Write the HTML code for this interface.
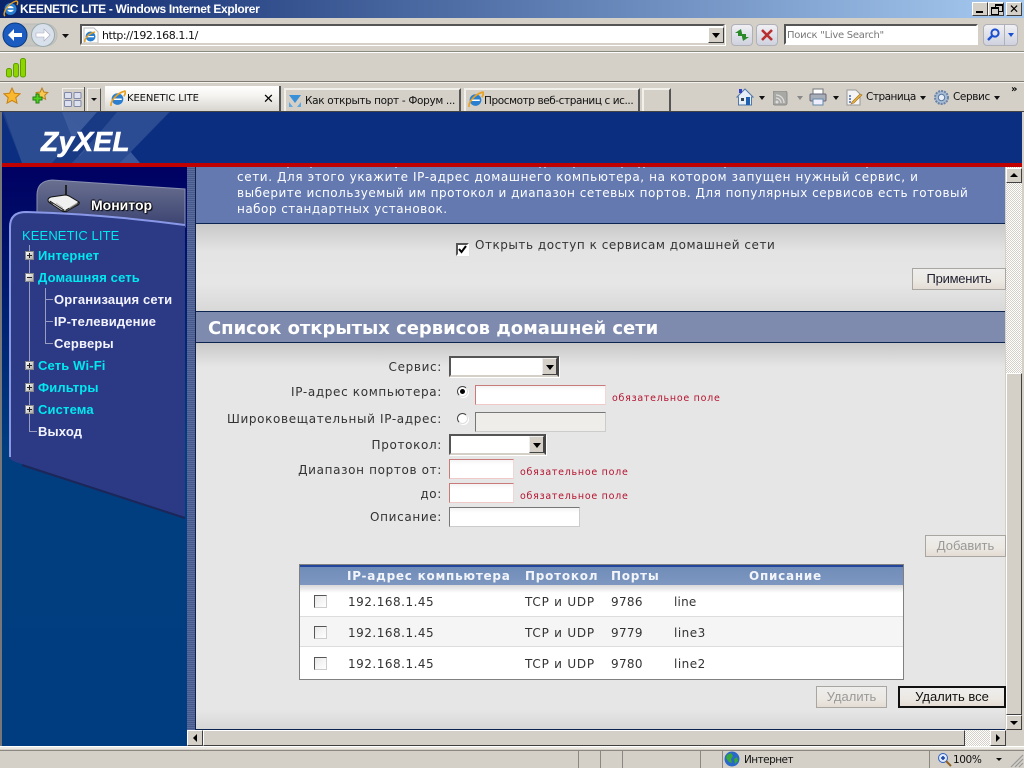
<!DOCTYPE html>
<html><head><meta charset="utf-8"><title>KEENETIC LITE</title>
<style>
html,body{margin:0;padding:0;width:1024px;height:768px;overflow:hidden;background:#d4d0c8}
body{position:relative;font-family:"Liberation Sans",sans-serif}
.a{position:absolute;white-space:nowrap}
.ui{font-family:"DejaVu Sans",sans-serif;font-size:10.5px;color:#111;line-height:14px}
.v{font-family:"DejaVu Sans",sans-serif;font-size:12px;color:#333;line-height:16px}
.lab{text-align:right;right:582px;letter-spacing:.65px}
.req{font-family:"DejaVu Sans",sans-serif;font-size:9.5px;color:#b5122e;line-height:12px;letter-spacing:.73px}
.inp{background:linear-gradient(#f4f4f4,#fff 5px);border:1px solid #c88;border-top-color:#c97a7a;border-left-color:#c97a7a;border-right-color:#f0d8d8;border-bottom-color:#f0c8c8;box-sizing:border-box}
.sel{background:#fff;box-sizing:border-box;border:2px solid;border-color:#555 #444 #d4d0c8 #555;box-shadow:1px 1px 0 #fff}
.arr{position:absolute;top:0;right:0;width:15px;height:100%;box-sizing:border-box;background:#d4d0c8;border:1px solid;border-color:#eee #444 #444 #eee}
.arr:after{content:"";position:absolute;left:3px;top:6px;border:4px solid transparent;border-top:5px solid #000;border-bottom:0}
.btn{box-sizing:border-box;border:1px solid #a9a5a0;background:linear-gradient(#eeeeee,#ece8e2 60%,#e4dcd4);text-align:center;font:13px/20px "Liberation Sans",sans-serif;color:#223}
.dis{color:#999}
.cb{position:absolute;width:13px;height:13px;box-sizing:border-box;border:1px solid;border-color:#555 #ccc #ccc #555;background:linear-gradient(135deg,#e8e8e8,#fff)}
.t{font-family:"DejaVu Sans",sans-serif;font-size:12px;color:#333;line-height:16px}
.th{font-family:"DejaVu Sans",sans-serif;font-size:12px;font-weight:bold;color:#f2f5fa;line-height:16px;letter-spacing:.75px}
.m{font:bold 13px/16px "Liberation Sans",sans-serif;color:#00e8f0;letter-spacing:.15px}
.w{color:#f4f4ff}
.box{position:absolute;left:25px;width:9px;height:9px;box-sizing:border-box;background:linear-gradient(135deg,#fff,#aaa);border:1px solid #888}
.box:before{content:"";position:absolute;left:1px;top:3px;width:5px;height:1px;background:#222}
.p:after{content:"";position:absolute;left:3px;top:1px;width:1px;height:5px;background:#222}
.ln{position:absolute;background:#9a9cc0}
.chk{background-image:repeating-conic-gradient(#d4d0c8 0 25%,#fff 0 50%);background-size:2px 2px}
.sb{position:absolute;box-sizing:border-box;background:#d4d0c8;border:1px solid;border-color:#fff #404040 #404040 #fff}
.tab{position:absolute;box-sizing:border-box;background:#d4d0c8;border-top:2px solid #f2f0ea;border-left:2px solid #f2f0ea;border-right:2px solid #555}
</style></head><body>

<!-- Title bar -->
<div class="a" style="left:0;top:0;width:1024px;height:18px;background:linear-gradient(90deg,#0a246a,#a6caf0)"></div>
<svg class="a" style="left:2px;top:0" width="17" height="18" viewBox="0 0 17 18"><ellipse cx="8.5" cy="9" rx="6" ry="6" fill="#2a7fd0"/><ellipse cx="8.5" cy="9" rx="3.4" ry="3" fill="#fff"/><rect x="4" y="8.2" width="9" height="1.6" fill="#2a7fd0"/><path d="M3 16C0 14 5 4 14 1c2 0 2 2 1 4" fill="none" stroke="#e8a020" stroke-width="1.4"/></svg>
<div class="a" style="left:20px;top:2px;font:bold 12px/14px 'Liberation Sans',sans-serif;color:#fff;letter-spacing:-.32px">KEENETIC LITE - Windows Internet Explorer</div>
<div class="a sb" style="left:972px;top:2px;width:16px;height:14px"><div class="a" style="left:3px;top:8px;width:7px;height:2px;background:#000"></div></div>
<div class="a sb" style="left:988px;top:2px;width:16px;height:14px"><div class="a" style="left:6px;top:1px;width:6px;height:5px;border:1px solid #000;border-top-width:2px"></div><div class="a" style="left:2px;top:4px;width:6px;height:5px;border:1px solid #000;border-top-width:2px;background:#d4d0c8"></div></div>
<div class="a sb" style="left:1006px;top:2px;width:16px;height:14px;font:bold 12px/12px 'DejaVu Sans',sans-serif;text-align:center">✕</div>

<!-- Address row -->
<svg class="a" style="left:0;top:19px" width="75" height="32" viewBox="0 0 75 32">
<rect x="5" y="5" width="52" height="22" rx="11" fill="#c8c6c0" stroke="#bbb"/>
<circle cx="15" cy="16" r="12" fill="#1c5cc0" stroke="#0c3a80"/><path d="M8 16l6-6v4h8v4h-8v4z" fill="#fff"/>
<circle cx="43" cy="16" r="11.5" fill="#d8e0ec" stroke="#9aa"/><path d="M50 16l-6-6v4h-8v4h8v4z" fill="#fff" stroke="#aab" stroke-width=".6"/>
<path d="M62 15h7l-3.5 4z" fill="#111"/></svg>
<div class="a" style="left:80px;top:24px;width:645px;height:21px;box-sizing:border-box;background:#fff;border:2px solid;border-color:#555 #d4d0c8 #d4d0c8 #555;box-shadow:1px 1px 0 #fff"></div>
<svg class="a" style="left:83px;top:27px" width="16" height="16" viewBox="0 0 16 16"><path d="M1 1h10l4 4v11H1z" fill="#fff" stroke="#bbb"/><circle cx="7.5" cy="9.5" r="5" fill="#2a7fd0"/><rect x="4" y="9" width="7" height="1.3" fill="#fff"/><path d="M2 15C1 12 6 6 12 5" fill="none" stroke="#e8a020" stroke-width="1.4"/></svg>
<div class="a ui" style="left:102px;top:29px;font-size:11px;letter-spacing:-.42px">http://192.168.1.1/</div>
<div class="a sb" style="left:708px;top:27px;width:16px;height:16px"><div class="a" style="left:3px;top:5px;border:4px solid transparent;border-top:5px solid #000;border-bottom:0"></div></div>
<div class="a" style="left:731px;top:24px;width:22px;height:22px;box-sizing:border-box;border:1px solid #b0b0b8;border-radius:4px;background:linear-gradient(#f0f0f4,#cfd2de)"></div>
<svg class="a" style="left:733px;top:26px" width="18" height="18" viewBox="0 0 18 18"><path d="M8 3L2 7h3v3h4V7zM10 15l6-4h-3V8H9v3z" fill="#2a8a2a"/></svg>
<div class="a" style="left:756px;top:24px;width:22px;height:22px;box-sizing:border-box;border:1px solid #b0b0b8;border-radius:4px;background:linear-gradient(#f0f0f4,#cfd2de)"></div>
<svg class="a" style="left:759px;top:27px" width="16" height="16" viewBox="0 0 16 16"><path d="M3 3l10 10M13 3L3 13" stroke="#b83030" stroke-width="2.6"/></svg>
<div class="a" style="left:784px;top:24px;width:194px;height:21px;box-sizing:border-box;background:#fff;border:2px solid;border-color:#555 #fff #fff #555"></div>
<div class="a ui" style="left:787px;top:29px;font-size:10px;color:#777;letter-spacing:-.27px">Поиск "Live Search"</div>
<div class="a" style="left:983px;top:24px;width:22px;height:22px;box-sizing:border-box;border:1px solid #b0b0b8;border-radius:4px 0 0 4px;background:linear-gradient(#f0f0f4,#cfd2de)"></div>
<svg class="a" style="left:985px;top:26px" width="18" height="18" viewBox="0 0 18 18"><circle cx="10" cy="7" r="3.6" fill="none" stroke="#1a50d0" stroke-width="2"/><path d="M7 10l-4 4" stroke="#1a50d0" stroke-width="2.4"/></svg>
<div class="a" style="left:1005px;top:24px;width:13px;height:22px;box-sizing:border-box;border:1px solid #b0b0b8;border-left:0;border-radius:0 4px 4px 0;background:linear-gradient(#f0f0f4,#cfd2de)"></div>
<div class="a" style="left:1008px;top:33px;border:3px solid transparent;border-top:4px solid #1a50d0;border-bottom:0"></div>
<div class="a" style="left:0;top:51px;width:1024px;height:1px;background:#8a8a80"></div>
<div class="a" style="left:0;top:52px;width:1024px;height:1px;background:#fff"></div>

<!-- Signal row -->
<svg class="a" style="left:5px;top:56px" width="22" height="23" viewBox="0 0 22 23"><rect x="1.500" y="12.500" width="5" height="8.500" rx="2" fill="#8ed400" stroke="#5da000"/><rect x="8.500" y="7.500" width="5" height="13.500" rx="2" fill="#8ed400" stroke="#5da000"/><rect x="15.500" y="2.500" width="5" height="18.500" rx="2" fill="#8ed400" stroke="#5da000"/></svg>
<div class="a" style="left:0;top:81px;width:1024px;height:1px;background:#807c74"></div>
<div class="a" style="left:0;top:82px;width:1024px;height:1px;background:#f4f2ec"></div>

<!-- Tabs row -->
<svg class="a" style="left:3px;top:87px" width="18" height="18" viewBox="0 0 18 18"><path d="M9 1l2.4 5.2 5.6.6-4.2 3.8 1.2 5.6L9 13.4 4 16.2l1.2-5.6L1 6.800l5.600-.6z" fill="#f8b830" stroke="#c88010"/></svg>
<svg class="a" style="left:31px;top:87px" width="18" height="18" viewBox="0 0 18 18"><path d="M11 1l1.800 4 4 .5-3 2.800.8 4-3.600-2-3.600 2 .8-4-3-2.800 4-.5z" fill="#f8c850" stroke="#b88020"/><path d="M5 7h3v3h3v3H8v3H5v-3H2v-3h3z" fill="#50d020" stroke="#208010"/></svg>
<div class="a" style="left:62px;top:88px;width:22px;height:22px;box-sizing:border-box;border:1px solid #f2f0ea;border-right:0;border-bottom:0"></div>
<svg class="a" style="left:64px;top:92px" width="18" height="16" viewBox="0 0 18 16"><g fill="#dde0ee" stroke="#8088a8"><rect x=".5" y=".5" width="7" height="6" rx="1"/><rect x="10" y=".5" width="7" height="6" rx="1"/><rect x=".5" y="8.500" width="7" height="6" rx="1"/><rect x="10" y="8.500" width="7" height="6" rx="1"/></g></svg>
<div class="a" style="left:84px;top:87px;width:1px;height:24px;background:#555"></div>
<div class="a" style="left:87px;top:88px;width:14px;height:23px;box-sizing:border-box;border:1px solid #f2f0ea;border-right:1px solid #555;border-bottom:0"></div>
<div class="a" style="left:91px;top:98px;border:3px solid transparent;border-top:3px solid #111;border-bottom:0"></div>
<div class="a" style="left:105px;top:86px;width:176px;height:25px;box-sizing:border-box;background:linear-gradient(#fff,#f4f3f0 40%,#d8d5ce);border-right:2px solid #555"></div>
<svg class="a" style="left:109px;top:90px" width="17" height="17" viewBox="0 0 16 16"><circle cx="8" cy="8.500" r="5.500" fill="#2a7fd0"/><rect x="4" y="8" width="8" height="1.400" fill="#fff"/><path d="M2 15C1 11 7 3 15 1c1 2 0 3-1 5" fill="none" stroke="#e8a020" stroke-width="1.500"/></svg>
<div class="a ui" style="left:127px;top:92px;font-size:10px;letter-spacing:-.1px">KEENETIC LITE</div>
<div class="a" style="left:263px;top:93px;font:bold 13px/13px 'DejaVu Sans',sans-serif;color:#000">✕</div>
<div class="tab" style="left:284px;top:88px;width:177px;height:23px"></div>
<svg class="a" style="left:288px;top:94px" width="14" height="14" viewBox="0 0 14 14"><path d="M1 1h12L7 9z" fill="#3a90d8"/><path d="M1 8l4 5H1zM13 8l-4 5h4z" fill="#60a8e0"/></svg>
<div class="a ui" style="left:305px;top:94px;font-size:10.500px;letter-spacing:-.33px">Как открыть порт - Форум ...</div>
<div class="tab" style="left:464px;top:88px;width:176px;height:23px"></div>
<svg class="a" style="left:467px;top:91px" width="17" height="17" viewBox="0 0 16 16"><circle cx="8" cy="8.500" r="5.500" fill="#2a7fd0"/><rect x="4" y="8" width="8" height="1.400" fill="#fff"/><path d="M2 15C1 11 7 3 15 1c1 2 0 3-1 5" fill="none" stroke="#e8a020" stroke-width="1.500"/></svg>
<div class="a ui" style="left:484px;top:94px;font-size:10.500px;letter-spacing:-.42px">Просмотр веб-страниц с ис...</div>
<div class="tab" style="left:642px;top:88px;width:29px;height:23px"></div>

<svg class="a" style="left:736px;top:88px" width="18" height="18" viewBox="0 0 18 18"><path d="M1 9l8-8 8 8-1.500 0v8h-13v-8z" fill="#e8eef8" stroke="#5078a8"/><rect x="10" y="9" width="4" height="8" fill="#2060b0"/><rect x="5" y="10" width="3" height="3" fill="#345"/><rect x="3" y="1" width="3" height="4" fill="#3040c0"/></svg>
<div class="a" style="left:759px;top:96px;border:3px solid transparent;border-top:4px solid #111;border-bottom:0"></div>
<svg class="a" style="left:773px;top:91px" width="15" height="15" viewBox="0 0 15 15"><rect width="14" height="14" rx="2" fill="#a8a8a4" stroke="#8c8c88"/><circle cx="4" cy="11" r="1.500" fill="#ddd"/><path d="M3 7a5 5 0 015 5M3 4a8 8 0 018 8" fill="none" stroke="#ddd" stroke-width="1.300"/></svg>
<div class="a" style="left:797px;top:96px;border:3px solid transparent;border-top:4px solid #888;border-bottom:0"></div>
<svg class="a" style="left:809px;top:88px" width="18" height="18" viewBox="0 0 18 18"><rect x="4" y="1" width="10" height="6" fill="#fff" stroke="#777"/><rect x="1" y="6" width="16" height="7" rx="1" fill="#a8aeb8" stroke="#667"/><rect x="4" y="11" width="10" height="6" fill="#eef" stroke="#68a"/></svg>
<div class="a" style="left:833px;top:96px;border:3px solid transparent;border-top:4px solid #111;border-bottom:0"></div>
<svg class="a" style="left:846px;top:89px" width="17" height="17" viewBox="0 0 17 17"><path d="M1 1h9l4 4v11H1z" fill="#f4f4f4" stroke="#999"/><path d="M3 7h2M3 10h2M3 13h2" stroke="#46a" stroke-width="1.500"/><path d="M6 13l8-8 2 1-8 8-3 1z" fill="#e8b040" stroke="#a07020" stroke-width=".6"/></svg>
<div class="a ui" style="left:866px;top:90px;letter-spacing:-.5px">Страница</div>
<div class="a" style="left:920px;top:96px;border:3px solid transparent;border-top:4px solid #111;border-bottom:0"></div>
<svg class="a" style="left:933px;top:89px" width="17" height="17" viewBox="0 0 17 17"><circle cx="8.500" cy="8.500" r="6.500" fill="#a8bcd4" stroke="#6a84a8" stroke-width="2" stroke-dasharray="2 1"/><circle cx="8.500" cy="8.500" r="3.200" fill="#e8eef6" stroke="#5878a0"/></svg>
<div class="a ui" style="left:953px;top:90px;letter-spacing:-.4px">Сервис</div>
<div class="a" style="left:994px;top:96px;border:3px solid transparent;border-top:4px solid #111;border-bottom:0"></div>
<div class="a" style="left:1011px;top:85px;font:bold 10px/10px 'DejaVu Sans',sans-serif;letter-spacing:-1px">»</div>
<div class="a" style="left:0;top:111px;width:1024px;height:1px;background:#444"></div>

<!-- Page frame -->
<div class="a" style="left:0;top:112px;width:2px;height:636px;background:#777"></div>
<!-- Banner -->
<div class="a" style="left:2px;top:112px;width:1020px;height:51px;background:#0c2e80;overflow:hidden"></div>
<svg class="a" style="left:2px;top:112px" width="170" height="51" viewBox="0 0 170 51">
<path d="M0 0H168L118 51H20z" fill="#1f4088"/>
<path d="M2 0H60L118 51H20z" fill="#2c4c92"/>
<path d="M60 0H95L138 51H80z" fill="#3f5e9f" opacity=".9"/>
<path d="M95 0h22L70 51H50z" fill="#183a84"/>
<path d="M115 0h52l-49 51H72z" fill="#2b4b92"/>
</svg>
<div class="a" style="left:41px;top:125px;font:italic bold 28px/34px 'Liberation Sans',sans-serif;color:#fff;letter-spacing:.35px;-webkit-text-stroke:.6px #fff">ZyXEL</div>
<div class="a" style="left:2px;top:163px;width:1020px;height:4px;background:#c00000"></div>

<!-- Sidebar -->
<div class="a" style="left:2px;top:167px;width:185px;height:563px;background:linear-gradient(#000062,#003e80 50%,#003d80)"></div>
<div class="a" style="left:2px;top:730px;width:185px;height:16px;background:#003d80"></div>
<svg class="a" style="left:2px;top:167px" width="185" height="360" viewBox="0 0 185 360">
<defs><linearGradient id="tb" x1="0" y1="0" x2="0" y2="1"><stop offset="0" stop-color="#6a7090"/><stop offset="1" stop-color="#3a4270"/></linearGradient></defs>
<path d="M35 60V28Q35 14 50 13L183 22V60z" fill="url(#tb)" stroke="#8a90b0"/>
<path d="M7 290V60Q7 44 24 44Q100 46 183 57V350L20 297Q8 294 7 290z" fill="#2c3a86"/>
<path d="M8 290V60Q8 45 24 45Q100 47 183 58" fill="none" stroke="#8a98e8" stroke-width="2"/>
<path d="M20 298L183 351" fill="none" stroke="#1c2658" stroke-width="2"/>
</svg>
<svg class="a" style="left:47px;top:184px" width="34" height="30" viewBox="0 0 34 30"><path d="M19 1v13" stroke="#222" stroke-width="2"/><path d="M1 16Q1 14 4 13L18 11Q20 11 22 12L32 18Q33 19 31 21L19 27Q17 28 15 27L3 19Q1 18 1 16z" fill="#f0f0f0" stroke="#111"/><path d="M3 19L17 28V26L3 17zM19 28L32 20V18L19 26z" fill="#555" stroke="#111" stroke-width=".7"/><path d="M6 20l9 6M9 19l7 5M22 24l8-5" stroke="#bbb" stroke-width=".8"/></svg>
<div class="a" style="left:91px;top:196px;font:bold 14px/18px 'Liberation Sans',sans-serif;color:#fff;text-shadow:1px 1px 1px #000,-1px 0 1px #000,0 -1px 1px #000">Монитор</div>
<div class="a" style="left:22px;top:228px;font:13px/16px 'Liberation Sans',sans-serif;color:#00e8f0;letter-spacing:.1px">KEENETIC LITE</div>
<div class="ln" style="left:29px;top:245px;width:1px;height:187px"></div>
<div class="ln" style="left:45px;top:288px;width:1px;height:56px"></div>
<div class="ln" style="left:45px;top:299px;width:8px;height:1px"></div>
<div class="ln" style="left:45px;top:321px;width:8px;height:1px"></div>
<div class="ln" style="left:45px;top:343px;width:8px;height:1px"></div>
<div class="ln" style="left:29px;top:431px;width:8px;height:1px"></div>
<div class="box p" style="top:251px"></div><div class="box" style="top:273px"></div><div class="box p" style="top:361px"></div><div class="box p" style="top:383px"></div><div class="box p" style="top:405px"></div>
<div class="a m" style="left:38px;top:248px">Интернет</div>
<div class="a m" style="left:38px;top:270px">Домашняя сеть</div>
<div class="a m w" style="left:54px;top:292px">Организация сети</div>
<div class="a m w" style="left:54px;top:314px">IP-телевидение</div>
<div class="a m w" style="left:54px;top:336px">Серверы</div>
<div class="a m" style="left:38px;top:358px">Сеть Wi-Fi</div>
<div class="a m" style="left:38px;top:380px">Фильтры</div>
<div class="a m" style="left:38px;top:402px">Система</div>
<div class="a m w" style="left:38px;top:424px">Выход</div>

<!-- Strip -->
<div class="a" style="left:187px;top:167px;width:8px;height:563px;background:repeating-linear-gradient(#5a6c9c 0 1px,#46588c 1px 2px)"></div>
<div class="a" style="left:195px;top:167px;width:1px;height:563px;background:#10204c"></div>

<!-- Content -->
<div class="a" style="left:196px;top:167px;width:809px;height:563px;background:#e6e6e6"></div>
<div class="a" style="left:196px;top:167px;width:809px;height:56px;background:#6379b0"></div>
<svg class="a" style="left:0;top:167px" width="1024" height="2"><path d="M288 0v1M311 0v1M396 0v1M540 0v1M545 0v1M574 0v1M622 0v1M639 0v1M644 0v1M725 0v1M867 0v1" stroke="#fff" fill="none"/></svg>
<div class="a" style="left:196px;top:223px;width:809px;height:1px;background:#0c2450"></div>
<div class="a" style="left:196px;top:224px;width:809px;height:87px;background:linear-gradient(#c8c8c8,#e4e4e4 28px,#e6e6e6 60px,#d8d8d8)"></div>
<div class="a v" style="left:237px;top:169px;color:#fff;letter-spacing:.61px">сети. Для этого укажите IP-адрес домашнего компьютера, на котором запущен нужный сервис, и</div>
<div class="a v" style="left:237px;top:185px;color:#fff;letter-spacing:.51px">выберите используемый им протокол и диапазон сетевых портов. Для популярных сервисов есть готовый</div>
<div class="a v" style="left:237px;top:201px;color:#fff;letter-spacing:.47px">набор стандартных установок.</div>

<div class="a" style="left:456px;top:243px;width:13px;height:13px;box-sizing:border-box;border:2px solid;border-color:#555 #fff #fff #555;background:#fff;box-shadow:0 0 0 .5px #ddd"></div>
<svg class="a" style="left:458px;top:245px" width="9" height="9" viewBox="0 0 9 9"><path d="M1 4l2.500 3L8 1" fill="none" stroke="#000" stroke-width="2"/></svg>
<div class="a v" style="left:475px;top:237px;letter-spacing:.53px">Открыть доступ к сервисам домашней сети</div>
<div class="a btn" style="left:912px;top:268px;width:94px;height:22px;letter-spacing:-.25px">Применить</div>

<div class="a" style="left:196px;top:311px;width:809px;height:32px;box-sizing:border-box;background:#7e8bae;border-top:1px solid #0c2450;border-bottom:1px solid #0c2450"></div>
<div class="a" style="left:208px;top:318px;font:bold 18px/22px 'DejaVu Sans',sans-serif;color:#fff;letter-spacing:-.03px">Список открытых сервисов домашней сети</div>
<div class="a" style="left:196px;top:343px;width:809px;height:24px;background:linear-gradient(#c8c8c8,#e6e6e6)"></div>
<div class="a" style="left:196px;top:710px;width:809px;height:20px;background:linear-gradient(#e6e6e6,#d6d6d6)"></div>
<div class="a" style="left:196px;top:729px;width:809px;height:1px;background:#0c2450"></div>

<!-- Form -->
<div class="a v lab" style="top:359px">Сервис:</div>
<div class="a v lab" style="top:384px">IP-адрес компьютера:</div>
<div class="a v lab" style="top:411px">Широковещательный IP-адрес:</div>
<div class="a v lab" style="top:437px">Протокол:</div>
<div class="a v lab" style="top:462px">Диапазон портов от:</div>
<div class="a v lab" style="top:486px">до:</div>
<div class="a v lab" style="top:509px">Описание:</div>
<div class="a sel" style="left:449px;top:356px;width:110px;height:21px"><div class="arr"></div></div>
<div class="a" style="left:457px;top:386px;width:11px;height:11px;box-sizing:border-box;border-radius:50%;background:#fff;border:1px solid;border-color:#444 #ddd #ddd #444;box-shadow:1px 1px 0 #fff"></div><div class="a" style="left:460px;top:389px;width:5px;height:5px;border-radius:50%;background:#000"></div>
<div class="a" style="left:457px;top:413px;width:11px;height:11px;box-sizing:border-box;border-radius:50%;background:#fff;border:1px solid;border-color:#444 #ddd #ddd #444;box-shadow:1px 1px 0 #fff"></div>
<div class="a inp" style="left:475px;top:385px;width:131px;height:20px"></div>
<div class="a req" style="left:612px;top:393px">обязательное поле</div>
<div class="a" style="left:475px;top:412px;width:131px;height:20px;box-sizing:border-box;background:#eeedea;border:1px solid;border-color:#777 #ccc #ccc #777"></div>
<div class="a sel" style="left:449px;top:434px;width:97px;height:21px"><div class="arr"></div></div>
<div class="a inp" style="left:449px;top:459px;width:65px;height:20px"></div>
<div class="a req" style="left:520px;top:467px">обязательное поле</div>
<div class="a inp" style="left:449px;top:483px;width:65px;height:20px"></div>
<div class="a req" style="left:520px;top:491px">обязательное поле</div>
<div class="a" style="left:449px;top:507px;width:131px;height:20px;box-sizing:border-box;background:linear-gradient(#f4f4f4,#fff 5px);border:1px solid;border-color:#777 #ccc #ccc #777"></div>
<div class="a btn dis" style="left:925px;top:535px;width:81px;height:22px">Добавить</div>

<!-- Table -->
<div class="a" style="left:299px;top:564px;width:605px;height:116px;box-sizing:border-box;border:1px solid #808080;background:#fff"></div>
<div class="a" style="left:300px;top:565px;width:603px;height:2px;background:#23459c"></div>
<div class="a" style="left:300px;top:567px;width:603px;height:18px;background:linear-gradient(#6f8cb8,#7d97c0)"></div>
<div class="a" style="left:300px;top:585px;width:603px;height:8px;background:linear-gradient(#d8d8d8,#fff)"></div>
<div class="a" style="left:300px;top:616px;width:603px;height:31px;box-sizing:border-box;background:#f5f5f5;border-top:1px solid #ddd;border-bottom:1px solid #ddd"></div>
<div class="a th" style="left:347px;top:568px">IP-адрес компьютера</div>
<div class="a th" style="left:525px;top:568px">Протокол</div>
<div class="a th" style="left:611px;top:568px">Порты</div>
<div class="a th" style="left:749px;top:568px">Описание</div>
<div class="cb" style="left:314px;top:595px"></div><div class="cb" style="left:314px;top:626px"></div><div class="cb" style="left:314px;top:657px"></div>
<div class="a t" style="left:348px;top:594px;letter-spacing:.5px">192.168.1.45</div><div class="a t" style="left:525px;top:594px;letter-spacing:.78px">TCP и UDP</div><div class="a t" style="left:611px;top:594px;letter-spacing:.33px">9786</div><div class="a t" style="left:674px;top:594px;letter-spacing:.2px">line</div>
<div class="a t" style="left:348px;top:625px;letter-spacing:.5px">192.168.1.45</div><div class="a t" style="left:525px;top:625px;letter-spacing:.78px">TCP и UDP</div><div class="a t" style="left:611px;top:625px;letter-spacing:.33px">9779</div><div class="a t" style="left:674px;top:625px;letter-spacing:.5px">line3</div>
<div class="a t" style="left:348px;top:656px;letter-spacing:.5px">192.168.1.45</div><div class="a t" style="left:525px;top:656px;letter-spacing:.78px">TCP и UDP</div><div class="a t" style="left:611px;top:656px;letter-spacing:.33px">9780</div><div class="a t" style="left:674px;top:656px;letter-spacing:.5px">line2</div>
<div class="a btn dis" style="left:816px;top:686px;width:71px;height:22px">Удалить</div>
<div class="a btn" style="left:898px;top:686px;width:108px;height:22px;border:2px solid #111;line-height:18px;color:#111">Удалить все</div>

<!-- V scrollbar -->
<div class="a chk" style="left:1006px;top:167px;width:16px;height:563px"></div>
<div class="a sb" style="left:1006px;top:168px;width:16px;height:15px"><div class="a" style="left:3px;top:4px;border:4px solid transparent;border-bottom:4px solid #000;border-top:0"></div></div>
<div class="a sb" style="left:1006px;top:373px;width:16px;height:342px"></div>
<div class="a sb" style="left:1006px;top:715px;width:16px;height:15px"><div class="a" style="left:3px;top:5px;border:4px solid transparent;border-top:4px solid #000;border-bottom:0"></div></div>
<!-- H scrollbar -->
<div class="a" style="left:187px;top:730px;width:835px;height:16px;background:#d4d0c8"></div>
<div class="a sb" style="left:187px;top:730px;width:16px;height:16px"><div class="a" style="left:5px;top:3px;border:4px solid transparent;border-right:4px solid #000;border-left:0"></div></div>
<div class="a sb" style="left:203px;top:730px;width:762px;height:16px"></div>
<div class="a chk" style="left:965px;top:730px;width:25px;height:16px"></div>
<div class="a sb" style="left:990px;top:730px;width:16px;height:16px"><div class="a" style="left:5px;top:3px;border:4px solid transparent;border-left:4px solid #000;border-right:0"></div></div>

<!-- Status bar -->
<div class="a" style="left:0;top:746px;width:1024px;height:1px;background:#fff"></div>
<div class="a" style="left:0;top:747px;width:1024px;height:2px;background:#ece9e2"></div>
<div class="a" style="left:0;top:749px;width:1024px;height:19px;background:#d4d0c8"></div>
<div class="a" style="left:0;top:750px;width:1024px;height:1px;background:#8a8880"></div>
<div class="a" style="left:578px;top:751px;width:1px;height:17px;background:#8a8880"></div>
<div class="a" style="left:600px;top:751px;width:1px;height:17px;background:#8a8880"></div>
<div class="a" style="left:622px;top:751px;width:1px;height:17px;background:#8a8880"></div>
<div class="a" style="left:700px;top:751px;width:1px;height:17px;background:#8a8880"></div>
<div class="a" style="left:722px;top:751px;width:1px;height:17px;background:#8a8880"></div>
<div class="a" style="left:929px;top:751px;width:1px;height:17px;background:#8a8880"></div>
<svg class="a" style="left:724px;top:751px" width="16" height="16" viewBox="0 0 16 16"><circle cx="8" cy="8" r="7.500" fill="#2868c8"/><path d="M3 4l4-2 2 3-2 3 1 4-3-1-3-4zM10 8l3-2 1 4-3 3z" fill="#38a838"/></svg>
<div class="a ui" style="left:744px;top:753px;letter-spacing:-.55px">Интернет</div>
<svg class="a" style="left:937px;top:752px" width="15" height="15" viewBox="0 0 15 15"><circle cx="6" cy="6" r="4.500" fill="#dce8ff" stroke="#3060c0"/><path d="M4 6h4M6 4v4" stroke="#1840a0" stroke-width="1.500"/><path d="M9 9l5 5" stroke="#906020" stroke-width="2"/></svg>
<div class="a ui" style="left:953px;top:753px;letter-spacing:-.4px">100%</div>
<div class="a" style="left:996px;top:758px;border:3px solid transparent;border-top:3px solid #111;border-bottom:0"></div>
<svg class="a" style="left:1010px;top:754px" width="14" height="14" viewBox="0 0 14 14"><path d="M13 1L1 13M13 5L5 13M13 9l-4 4" stroke="#999" stroke-width="1.200"/></svg>
</body></html>
